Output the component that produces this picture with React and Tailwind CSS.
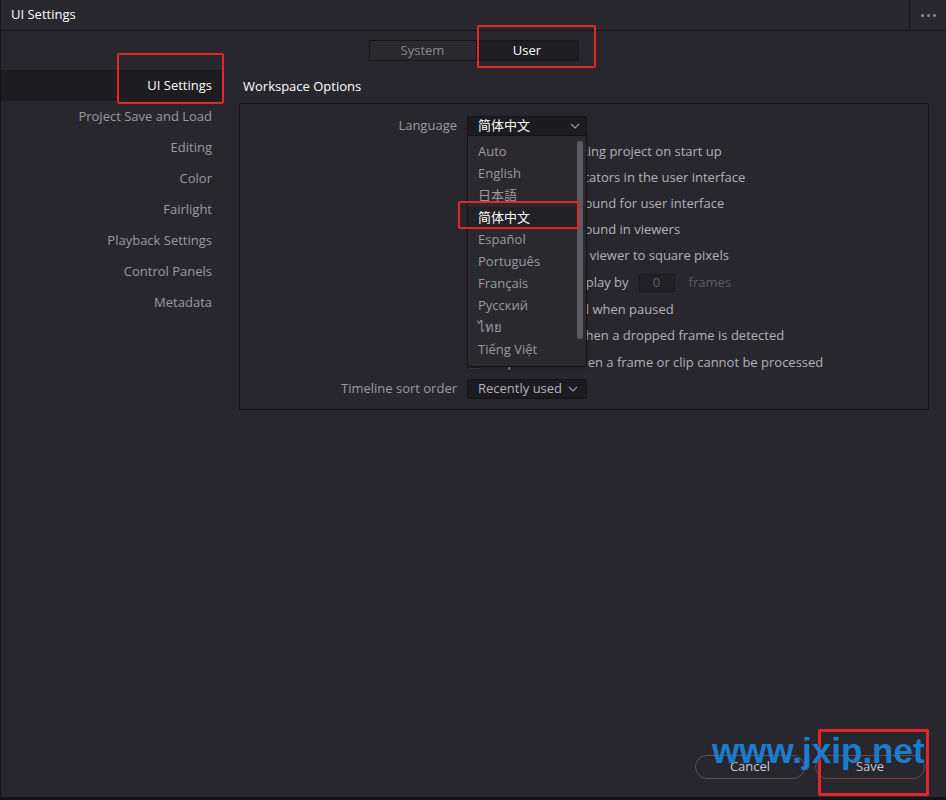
import React from "react";

const font = { fontFamily: '"Open Sans", "Noto Sans", "Noto Sans CJK SC", sans-serif' };

const sidebar = [
  "UI Settings",
  "Project Save and Load",
  "Editing",
  "Color",
  "Fairlight",
  "Playback Settings",
  "Control Panels",
  "Metadata",
];

const languages = [
  "Auto",
  "English",
  "日本語",
  "简体中文",
  "Español",
  "Português",
  "Français",
  "Русский",
  "ไทย",
  "Tiếng Việt",
];

// tall: rows that sit one pixel lower in the original
const checks = [
  { t: "Reload last working project on start up" },
  { t: "Show focus indicators in the user interface" },
  { t: "Use gray background for user interface" },
  { t: "Use gray background in viewers" },
  { t: "Always scale the viewer to square pixels" },
  { t: "DELAY", tall: true },
  { t: "Show single field when paused", tall: true },
  { t: "Stop playback when a dropped frame is detected" },
  { t: "Stop renders when a frame or clip cannot be processed", tall: true },
];

function Chevron() {
  return (
    <svg width="10" height="6" viewBox="0 0 10 6" className="shrink-0">
      <path d="M1 1l4 4 4-4" fill="none" stroke="#9a99a0" strokeWidth="1.2" />
    </svg>
  );
}

function Checkbox() {
  return <div className="w-[12px] h-[12px] rounded-[2px] bg-[#1c1b20] border border-[#3a393f] shrink-0"></div>;
}

export default function App() {
  return (
    <div
      className="w-[946px] h-[800px] bg-[#28272d] border-l border-b-[3px] border-[#151518] relative flex flex-col text-[13px] overflow-hidden"
      style={font}
    >
      {/* title bar */}
      <div className="h-[31px] flex items-center border-b border-[#17171a] bg-[#29282e] shrink-0">
        <div className="flex-1 pl-[10px] text-white text-[13px]">UI Settings</div>
        <div className="w-[37px] h-full border-l border-[#17171a] flex items-center justify-center gap-[3px]">
          <div className="w-[3px] h-[3px] rounded-full bg-[#8d8c92]"></div>
          <div className="w-[3px] h-[3px] rounded-full bg-[#8d8c92]"></div>
          <div className="w-[3px] h-[3px] rounded-full bg-[#8d8c92]"></div>
        </div>
      </div>

      {/* tabs */}
      <div className="flex justify-center pt-[9px] shrink-0">
        <div className="flex h-[21px]">
          <div className="w-[108px] flex items-center justify-center bg-[#2a292e] border border-[#17171a] text-[#8a898f]">
            System
          </div>
          <div className="w-[102px] flex items-center justify-center bg-[#1e1d22] border border-l-0 border-[#17171a] text-white">
            User
          </div>
        </div>
      </div>

      {/* main */}
      <div className="flex flex-1 pt-[9px]">
        <div className="w-[222px] shrink-0 flex flex-col">
          {sidebar.map((s, i) => (
            <div
              key={s}
              className={`h-[31px] flex items-center justify-end pr-[11px] ${
                i === 0 ? "bg-[#1d1c21] text-white" : "text-[#9b9aa0]"
              }`}
            >
              {s}
            </div>
          ))}
        </div>

        <div className="ml-[16px] w-[690px] flex flex-col">
          <div className="h-[33px] flex items-center pl-[4px] text-white">Workspace Options</div>
          <div className="relative h-[307px] border border-[#141417] rounded-[2px] bg-[#28272d] pt-[10px]">
            {/* language */}
            <div className="h-[24px] flex items-center">
              <div className="w-[217px] text-right text-[#9b9aa0]">Language</div>
              <div className="ml-[10px] w-[120px] h-[20px] bg-[#1c1b20] border border-[#141417] rounded-[2px] flex items-center justify-between pl-[10px] pr-[6px] text-white">
                <span>简体中文</span>
                <Chevron />
              </div>
            </div>

            <div className="pt-[1px]">
              {checks.map((c) => (
                <div key={c.t} className={`${c.tall ? "h-[27px]" : "h-[26px]"} flex items-center pl-[229px]`}>
                  <Checkbox />
                  {c.t === "DELAY" ? (
                    <div className="ml-[7px] flex items-center text-[#b3b2b8]">
                      <span>Delay viewer display by</span>
                      <div className="ml-[10px] w-[36px] h-[18px] bg-[#222126] border border-[#1a191d] flex items-center justify-center text-[#5d5c62]">
                        0
                      </div>
                      <span className="ml-[14px] text-[#5d5c62]">frames</span>
                    </div>
                  ) : (
                    <span className="ml-[7px] text-[#b3b2b8]">{c.t}</span>
                  )}
                </div>
              ))}
            </div>

            {/* timeline sort order */}
            <div className="h-[26px] flex items-center">
              <div className="w-[217px] text-right text-[#9b9aa0]">Timeline sort order</div>
              <div className="ml-[10px] w-[120px] h-[20px] bg-[#1c1b20] border border-[#141417] rounded-[2px] flex items-center pl-[10px] gap-[6px] text-[#b3b2b8]">
                <span>Recently used</span>
                <Chevron />
              </div>
            </div>

            {/* open language list */}
            <div className="absolute left-[227px] top-[31px] w-[120px] h-[232px] bg-[#2a292e] border border-[#141417] pt-[5px] shadow-md">
              {languages.map((l) => (
                <div
                  key={l}
                  className={`h-[22px] flex items-center pl-[10px] ${
                    l === "简体中文" ? "bg-[#222126] text-white" : "text-[#9b9aa0]"
                  }`}
                >
                  {l}
                </div>
              ))}
              <div className="absolute right-[3px] top-[5px] w-[6px] h-[198px] rounded-full bg-[#5c5b61]"></div>
            </div>
          </div>
        </div>
      </div>

      {/* footer */}
      <div className="flex justify-end gap-[10px] pr-[21px] pb-[18px] shrink-0">
        <div className="w-[110px] h-[24px] rounded-full border border-[#5c5250] flex items-center justify-center text-[#c9c8ce]">
          Cancel
        </div>
        <div className="w-[110px] h-[24px] rounded-full border border-[#7a3e35] flex items-center justify-center text-[#c9c8ce]">
          Save
        </div>
      </div>

      {/* annotations */}
      <div className="absolute left-[476px] top-[25px] w-[119px] h-[43px] border-2 border-[#e3262b] rounded-[2px]"></div>
      <div className="absolute left-[116px] top-[53px] w-[107px] h-[51px] border-2 border-[#e3262b] rounded-[2px]"></div>
      <div className="absolute left-[457px] top-[201px] w-[121px] h-[28px] border-2 border-[#e3262b] rounded-[2px]"></div>
      <div className="absolute left-[817px] top-[729px] w-[111px] h-[67px] border-[3px] border-[#e3262b] rounded-[2px]"></div>
      <div
        className="absolute left-[711px] top-[733px] text-[35px] font-bold text-[#1b7ccd] leading-none"
        style={{ fontFamily: '"Liberation Sans", Arial, sans-serif' }}
      >
        www.jxip.net
      </div>
    </div>
  );
}
